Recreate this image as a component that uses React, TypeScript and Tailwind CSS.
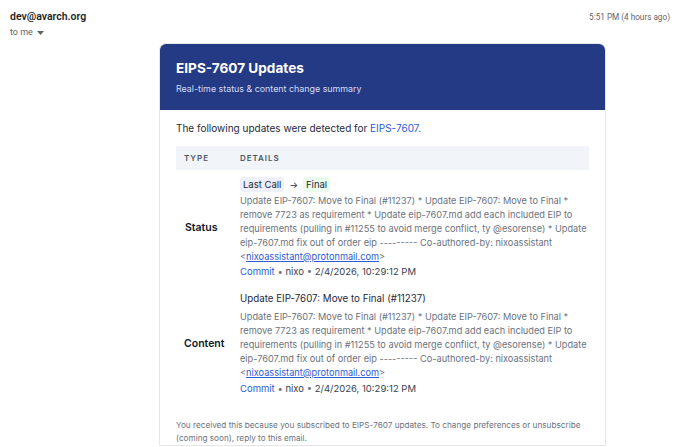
import React from "react";

const desc =
  "Update EIP-7607: Move to Final (#11237) * Update EIP-7607: Move to Final * remove 7723 as requirement * Update eip-7607.md add each included EIP to requirements (pulling in #11255 to avoid merge conflict, ty @esorense) * Update eip-7607.md fix out of order eip --------- Co-authored-by: nixoassistant";

function Meta() {
  return (
    <div className="text-[9.5px] leading-[14px] text-[#374151]">
      <span className="text-[#2d5bd3]">Commit</span>
      <span className="text-[#6b7280]"> • </span>nixo
      <span className="text-[#6b7280]"> • </span>2/4/2026, 10:29:12 PM
    </div>
  );
}

function Desc() {
  return (
    <div className="text-[9.2px] leading-[14px] text-[#6b7280]">
      {desc}{" "}
      &lt;<span className="text-[#2d5bd3] underline">nixoassistant@protonmail.com</span>&gt;
    </div>
  );
}

export default function App() {
  return (
    <div className="h-[447px] overflow-hidden bg-white font-['Inter',sans-serif]">
      {/* Gmail header */}
      <div className="flex justify-between px-[10px] pt-[10px]">
        <div className="font-['Roboto',sans-serif]">
          <div className="text-[10.5px] leading-[14px] font-semibold text-[#1f1f1f]">dev@avarch.org</div>
          <div className="mt-[2px] flex items-center gap-[4px] text-[9px] leading-[13px] text-[#5f6368]">
            to me
            <svg width="7" height="4" viewBox="0 0 7 4"><path d="M0 0h7L3.5 4z" fill="#5f6368" /></svg>
          </div>
        </div>
        <div className="pt-[1px] text-[8.2px] text-[#5f6368] font-['Roboto',sans-serif]">5:51 PM (4 hours ago)</div>
      </div>

      {/* Card */}
      <div className="ml-[159px] mt-[4px] w-[447px] overflow-hidden rounded-t-[7px] border border-[#e5e7eb]">
        <div className="bg-[#253a85] px-[16px] pt-[14px] pb-[15px]">
          <div className="text-[13.6px] leading-[20px] font-bold text-white">EIPS-7607 Updates</div>
          <div className="mt-[3.5px] text-[8.9px] leading-[13px] text-[#d4dcf5]">Real-time status &amp; content change summary</div>
        </div>
        <div className="px-[16px] pt-[11px]">
          <div className="text-[10px] leading-[15px] text-[#1f2937]">
            The following updates were detected for <span className="text-[#2d5bd3]">EIPS-7607</span>.
          </div>
          <div className="mt-[10px]">
            <div className="flex h-[24px] items-center bg-[#f1f4f9] text-[8px] font-semibold tracking-[0.12em] text-[#4b5563]">
              <div className="w-[64px] pl-[8px]">TYPE</div>
              <div>DETAILS</div>
            </div>
            <div className="flex pt-[7.5px]">
              <div className="flex w-[64px] items-center pl-[9px] text-[10.5px] font-semibold text-[#111827]">Status</div>
              <div className="flex-1">
                <div className="mb-[1.5px] flex items-center gap-[5px] text-[9.5px] leading-[15px] text-[#1f2937]">
                  <span className="rounded-[3px] bg-[#eef0fa] px-[3px]">Last Call</span>
                  <span className="text-[9px]">→</span>
                  <span className="rounded-[3px] bg-[#eafbee] px-[3px]">Final</span>
                </div>
                <Desc />
                <div className="mt-[1px]">
                  <Meta />
                </div>
              </div>
            </div>
            <div className="flex pt-[13px]">
              <div className="flex w-[64px] items-center pl-[8px] text-[10.5px] font-semibold text-[#111827]">Content</div>
              <div className="flex-1">
                <div className="mb-[4px] text-[9.75px] leading-[14px] text-[#1f2937]">Update EIP-7607: Move to Final (#11237)</div>
                <Desc />
                <div className="mt-[2.5px]">
                  <Meta />
                </div>
              </div>
            </div>
          </div>
        </div>
        <div className="mt-[23px] px-[16px] text-[8.2px] leading-[13px] text-[#6b7280]">
          You received this because you subscribed to EIPS-7607 updates. To change preferences or unsubscribe (coming soon), reply to this email.
        </div>
      </div>
    </div>
  );
}
